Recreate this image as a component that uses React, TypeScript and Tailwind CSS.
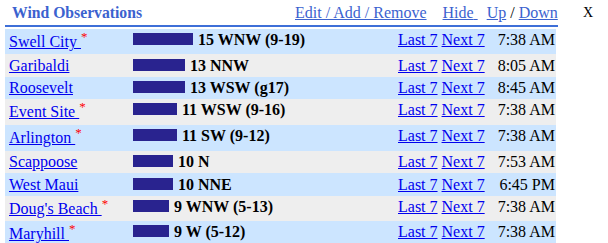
import React from "react";

type Obs = {
  name: string;
  star: boolean;
  speed: number;
  label: string;
  time: string;
  h: string;
};

const ROWS: Obs[] = [
  { name: "Swell City", star: true, speed: 15, label: "15 WNW (9-19)", time: "7:38 AM", h: "h-[25px]" },
  { name: "Garibaldi", star: false, speed: 13, label: "13 NNW", time: "8:05 AM", h: "h-[23px]" },
  { name: "Roosevelt", star: false, speed: 13, label: "13 WSW (g17)", time: "8:45 AM", h: "h-[22px]" },
  { name: "Event Site", star: true, speed: 11, label: "11 WSW (9-16)", time: "7:38 AM", h: "h-[26px]" },
  { name: "Arlington", star: true, speed: 11, label: "11 SW (9-12)", time: "7:38 AM", h: "h-[26px]" },
  { name: "Scappoose", star: false, speed: 10, label: "10 N", time: "7:53 AM", h: "h-[22px]" },
  { name: "West Maui", star: false, speed: 10, label: "10 NNE", time: "6:45 PM", h: "h-[23px]" },
  { name: "Doug's Beach", star: true, speed: 9, label: "9 WNW (5-13)", time: "7:38 AM", h: "h-[25px]" },
  { name: "Maryhill", star: true, speed: 9, label: "9 W (5-12)", time: "7:38 AM", h: "h-[25px]" },
];

function Row({ row, index }: { row: Obs; index: number }) {
  const bg = index % 2 === 0 ? "bg-[#cce5ff]" : "bg-[#eeeeee]";
  // rows with a starred station sit a little differently: the name drops, the rest rises
  const cell = row.star ? "pt-[2px]" : "self-center";
  return (
    <div className={`flex ${row.h} ${bg} text-[16px] leading-[18px]`}>
      <div className={`w-[128px] pl-[4px] ${row.star ? "pt-[4px]" : "self-center"}`}>
        <a href="#" className="text-[#0000ee] underline">
          {row.star ? row.name + " " : row.name}
        </a>
        {row.star && <sup className="text-[13px] text-[#ff0000]">*</sup>}
      </div>
      <div className={`w-[262px] ${cell}`}>
        <span className="inline-block h-[12px] bg-[#29238f]" style={{ width: row.speed * 4 }} />
        <b className="ml-[5px] font-bold text-black">{row.label}</b>
      </div>
      <div className={`pl-[3px] ${cell}`}>
        <a href="#" className="text-[#0000ee] underline">Last 7</a>{" "}
        <a href="#" className="text-[#0000ee] underline">Next 7</a>
      </div>
      <div className={`flex-1 pr-[1px] text-right text-black ${cell}`}>{row.time}</div>
    </div>
  );
}

export default function App() {
  return (
    <div className="flex h-[243px] w-[608px] overflow-hidden bg-white font-['Liberation_Serif',serif]">
      <div className="ml-[5px] w-[553px]">
        <div className="grid h-[27px] grid-cols-[290px_1fr] border-b-2 border-[#3e6fd8] pt-[4px] leading-[17px]">
          <div className="pl-[7px] text-[15.7px] font-bold text-[#3b62cf]">Wind Observations</div>
          <div className="whitespace-nowrap text-[16px] text-[#3b62cf]">
            <a href="#" className="underline">Edit / Add / Remove</a>
            <a href="#" className="ml-[16px] underline">Hide{"\u00a0"}</a>
            <a href="#" className="ml-[9px] underline">Up</a>
            <span className="text-black"> / </span>
            <a href="#" className="underline">Down</a>
          </div>
        </div>
        <div className="mt-[2px] w-[551px]">
          {ROWS.map((r, i) => (
            <Row key={r.name} row={r} index={i} />
          ))}
        </div>
      </div>
      <div className="ml-[25px] pt-[5px] text-[14px] leading-[16px] text-black">X</div>
    </div>
  );
}
